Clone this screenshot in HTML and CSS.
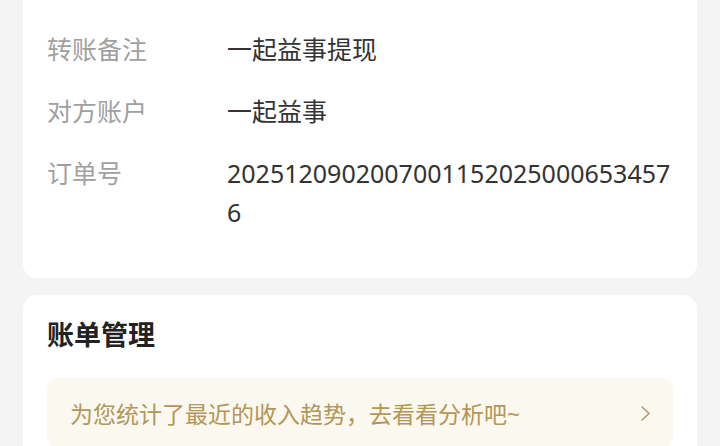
FILE: index.html
```html
<!DOCTYPE html>
<html lang="zh-CN">
<head>
<meta charset="utf-8">
<link rel="stylesheet" href="styles.css">
</head>
<body>
<div class="page">
  <section class="card detail">
    <div class="row"><span class="label">创建时间</span><span class="value">2025-12-09 20:07:00</span></div>
    <div class="row"><span class="label">转账备注</span><span class="value">一起益事提现</span></div>
    <div class="row"><span class="label">对方账户</span><span class="value">一起益事</span></div>
    <div class="row"><span class="label">订单号</span><span class="value num">20251209020070011520250006534576</span></div>
  </section>
  <section class="card manage">
    <h2 class="title">账单管理</h2>
    <div class="tip">
      <span class="tip-text">为您统计了最近的收入趋势，去看看分析吧~</span>
      <svg class="chev" width="11" height="17" viewBox="0 0 11 17"><polyline points="2,2 9,8.5 2,15" fill="none" stroke="#a8966c" stroke-width="1.5" stroke-linecap="round" stroke-linejoin="round"/></svg>
    </div>
  </section>
</div>
</body>
</html>
```
FILE: styles.css
```css
html, body {
  margin: 0;
  padding: 0;
  background: #f4f4f4;
  overflow: hidden;
}
body {
  font-family: "Noto Sans", "Noto Sans CJK SC", sans-serif;
  width: 720px;
  height: 446px;
}
.page {
  padding: 0 23px;
}
.card {
  background: #ffffff;
  border-radius: 14px;
  padding: 0 24px;
}
.detail {
  margin-top: -56px;
  padding-top: 24px;
  padding-bottom: 46px;
  display: flex;
  flex-direction: column;
  gap: 23px;
}
.row {
  display: flex;
  font-size: 25px;
  line-height: 39px;
}
.label {
  width: 180px;
  flex: none;
  color: #a0a0a0;
}
.value {
  flex: 1;
  min-width: 0;
  color: #333333;
  word-break: break-all;
}
.manage {
  margin-top: 17px;
  padding-top: 22px;
  padding-bottom: 40px;
}
.title {
  margin: 0;
  font-size: 27px;
  line-height: 36px;
  font-weight: 700;
  color: #222222;
}
.tip {
  margin-top: 25px;
  height: 70px;
  background: #fbf8ef;
  border-radius: 12px;
  padding: 0 22px 0 23px;
  display: flex;
  align-items: center;
  justify-content: space-between;
}
.tip-text {
  font-size: 23px;
  color: #b39658;
}
.chev {
  flex: none;
}
```
